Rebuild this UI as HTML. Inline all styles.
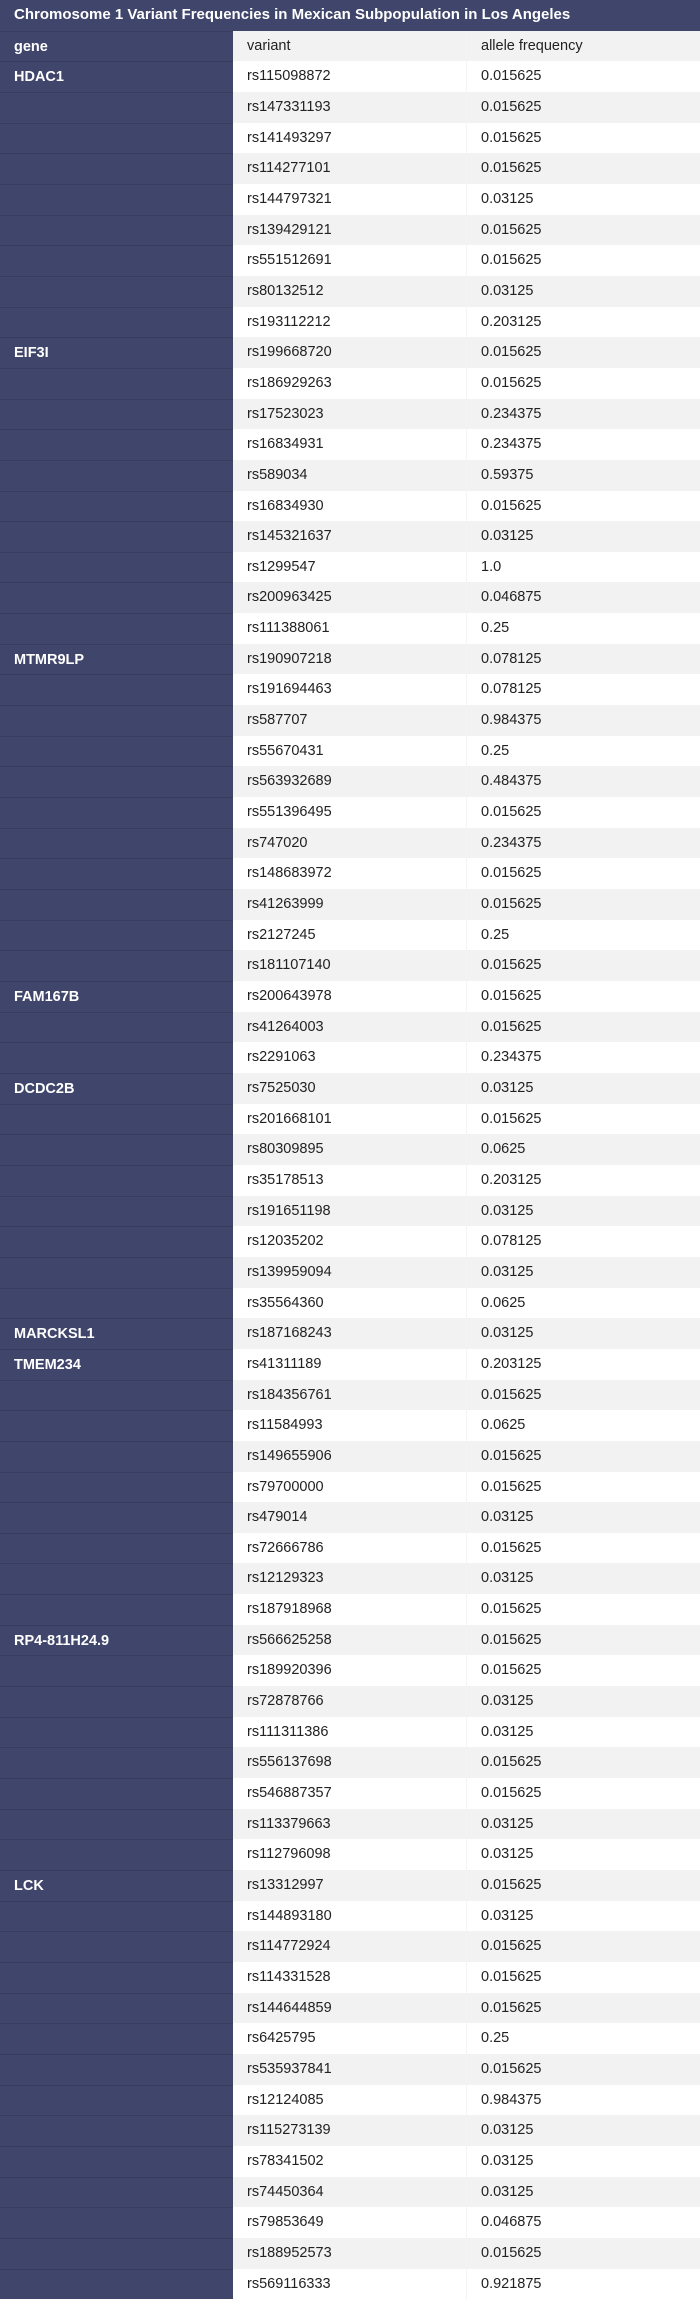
<!DOCTYPE html>
<html><head><meta charset="utf-8"><style>
*{margin:0;padding:0;box-sizing:border-box}
body{width:700px;height:2300px;background:#fff;font-family:"Liberation Sans",sans-serif;font-size:14.5px;color:#222;overflow:hidden}
.t{height:30.667px;background:#40466b;color:#fff;font-weight:bold;line-height:30.667px;padding-left:14px;font-size:15px}
.r{display:flex;height:30.667px;line-height:30.667px}
.g{width:233px;background:#40466b;color:#fff;font-weight:bold;padding-left:14px;border-top:1px solid #383d60}
.v{width:234px;padding-left:14px;border-right:1px solid #f4f4f4}
.f{flex:1;padding-left:14px}
.r:nth-child(odd) .v,.r:nth-child(odd) .f{background:#f2f2f2}
</style></head><body>
<div class="t">Chromosome 1 Variant Frequencies in Mexican Subpopulation in Los Angeles</div>
<div id="tb">
<div class="r"><div class="g">gene</div><div class="v">variant</div><div class="f">allele frequency</div></div>
</div>
<script>
const d=`HDAC1|rs115098872|0.015625
|rs147331193|0.015625
|rs141493297|0.015625
|rs114277101|0.015625
|rs144797321|0.03125
|rs139429121|0.015625
|rs551512691|0.015625
|rs80132512|0.03125
|rs193112212|0.203125
EIF3I|rs199668720|0.015625
|rs186929263|0.015625
|rs17523023|0.234375
|rs16834931|0.234375
|rs589034|0.59375
|rs16834930|0.015625
|rs145321637|0.03125
|rs1299547|1.0
|rs200963425|0.046875
|rs111388061|0.25
MTMR9LP|rs190907218|0.078125
|rs191694463|0.078125
|rs587707|0.984375
|rs55670431|0.25
|rs563932689|0.484375
|rs551396495|0.015625
|rs747020|0.234375
|rs148683972|0.015625
|rs41263999|0.015625
|rs2127245|0.25
|rs181107140|0.015625
FAM167B|rs200643978|0.015625
|rs41264003|0.015625
|rs2291063|0.234375
DCDC2B|rs7525030|0.03125
|rs201668101|0.015625
|rs80309895|0.0625
|rs35178513|0.203125
|rs191651198|0.03125
|rs12035202|0.078125
|rs139959094|0.03125
|rs35564360|0.0625
MARCKSL1|rs187168243|0.03125
TMEM234|rs41311189|0.203125
|rs184356761|0.015625
|rs11584993|0.0625
|rs149655906|0.015625
|rs79700000|0.015625
|rs479014|0.03125
|rs72666786|0.015625
|rs12129323|0.03125
|rs187918968|0.015625
RP4-811H24.9|rs566625258|0.015625
|rs189920396|0.015625
|rs72878766|0.03125
|rs111311386|0.03125
|rs556137698|0.015625
|rs546887357|0.015625
|rs113379663|0.03125
|rs112796098|0.03125
LCK|rs13312997|0.015625
|rs144893180|0.03125
|rs114772924|0.015625
|rs114331528|0.015625
|rs144644859|0.015625
|rs6425795|0.25
|rs535937841|0.015625
|rs12124085|0.984375
|rs115273139|0.03125
|rs78341502|0.03125
|rs74450364|0.03125
|rs79853649|0.046875
|rs188952573|0.015625
|rs569116333|0.921875`;
let h='';d.split('\n').forEach(l=>{const[a,b,c]=l.split('|');h+=`<div class="r"><div class="g">${a}</div><div class="v">${b}</div><div class="f">${c}</div></div>`});
document.getElementById('tb').insertAdjacentHTML('beforeend',h);
</script>
</body></html>
